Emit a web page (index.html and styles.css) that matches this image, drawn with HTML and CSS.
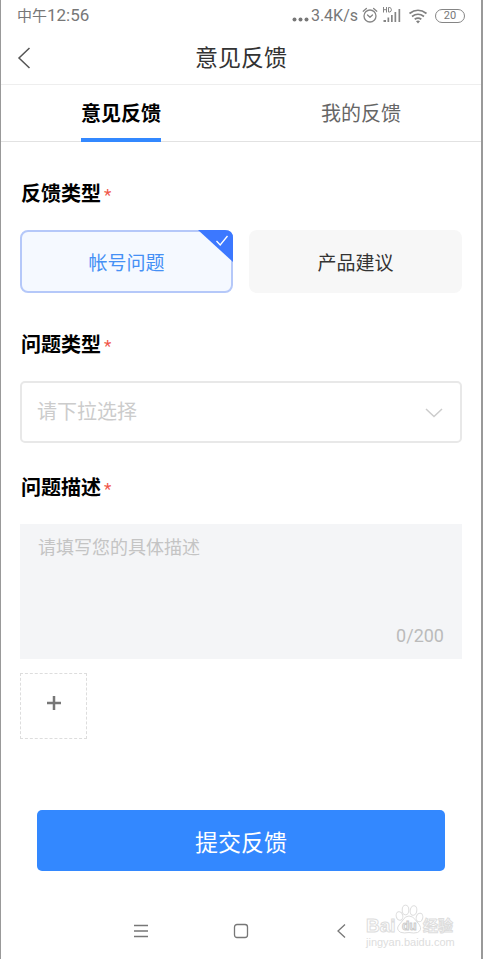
FILE: index.html
```html
<!DOCTYPE html>
<html lang="zh-CN">
<head>
<meta charset="utf-8">
<meta name="viewport" content="width=device-width, initial-scale=1">
<title>意见反馈</title>
<link rel="stylesheet" href="styles.css">
</head>
<body>
<div class="screen">
  <div class="status">
    <div class="status-time"><span class="status-period">中午</span>12:56</div>
    <div class="status-icons">
      <svg class="dots" width="17" height="18" viewBox="0 0 17 18" fill="#777"><circle cx="2.5" cy="12.5" r="2"/><circle cx="8.5" cy="12.5" r="2"/><circle cx="14.5" cy="12.5" r="2"/></svg>
      <span class="speed">3.4K/s</span>
      <svg class="alarm" width="16" height="18" viewBox="0 0 16 18" fill="none" stroke="#858585" stroke-width="1.3" stroke-linecap="round" stroke-linejoin="round"><circle cx="8" cy="9" r="6"/><path d="M1.2 4.2 4.4 1.500M14.8 4.2 11.6 1.500M5.5 8 8 10.300l2.500-2.300"/></svg>
      <svg class="signal" width="20" height="18" viewBox="0 0 20 18"><g fill="none" stroke="#858585" stroke-width="1"><path d="M1.500 0v5.500M4.500 0v5.500M1.500 2.700h3M6.500.5V5h1.300q1.600-.4 1.600-2.200T7.800.5z"/></g><path fill="#858585" d="M1.500 13h2.500v2H1.500zM5.500 10.500h1.700V15H5.500zM9 8h1.700v7H9zM12.500 5h1.700v10h-1.700zM16.500 2h1.700v13h-1.700z"/></svg>
      <svg class="wifi" width="20" height="18" viewBox="0 0 20 18" fill="none" stroke="#808080" stroke-width="1.7"><path d="M1.500 6.500q8.500-6.500 17 0M4 9.500q6-4.500 12 0M6.700 12.300q3.300-2.400 6.600 0"/><path fill="#808080" stroke="none" d="M8 14.200q2-1.300 4 0l-2 2.300z"/></svg>
      <span class="battery">20</span>
    </div>
  </div>

  <header class="header">
    <button class="back" type="button" aria-label="返回"><svg width="14" height="22" viewBox="0 0 14 22" fill="none" stroke="#555" stroke-width="1.5"><path d="M12.500 1 2 11l10.500 10"/></svg></button>
    <h1 class="title">意见反馈</h1>
  </header>

  <nav class="tabs">
    <button class="tab tab-active" type="button"><span class="tab-text">意见反馈</span></button>
    <button class="tab" type="button"><span class="tab-text">我的反馈</span></button>
  </nav>

  <form class="form">
    <fieldset class="field">
      <legend class="label">反馈类型<span class="required">*</span></legend>
      <div class="options">
        <label class="option">
          <input class="option-input" type="radio" name="kind" checked>
          <span class="option-text">帐号问题</span>
          <svg class="corner" width="35" height="32" viewBox="0 0 35 32"><path fill="#3c78ff" d="M0 0h27q8 0 8 8v24z"/><path fill="none" stroke="#fff" stroke-width="1.300" d="m18.500 11 3.700 4 7.300-9"/></svg>
        </label>
        <label class="option">
          <input class="option-input" type="radio" name="kind">
          <span class="option-text">产品建议</span>
        </label>
      </div>
    </fieldset>

    <div class="field">
      <label class="label" for="topic">问题类型<span class="required">*</span></label>
      <div class="select-box">
        <select class="select" id="topic"><option>请下拉选择</option></select>
        <svg class="chevron" width="18" height="10" viewBox="0 0 18 10" fill="none" stroke="#ccc" stroke-width="1.500"><path d="m1 1 8 7.500L17 1"/></svg>
      </div>
    </div>

    <div class="field field-last">
      <label class="label" for="detail">问题描述<span class="required">*</span></label>
      <div class="detail-box">
        <textarea class="detail" id="detail" maxlength="200" placeholder="请填写您的具体描述"></textarea>
        <span class="count">0/200</span>
      </div>
    </div>

    <button class="upload" type="button" aria-label="添加图片"><svg width="14" height="14" viewBox="0 0 14 14" stroke="#777" stroke-width="2.500"><path d="M7 0v14M0 7h14"/></svg></button>
    <button class="submit" type="submit">提交反馈</button>
  </form>

  <footer class="system">
    <button class="key" type="button" aria-label="菜单"><svg width="16" height="16" viewBox="0 0 16 16" stroke="#777" stroke-width="1.300"><path d="M1 2.500h14M1 8h14M1 13.500h14"/></svg></button>
    <button class="key" type="button" aria-label="主页"><svg width="16" height="16" viewBox="0 0 16 16" fill="none" stroke="#777" stroke-width="1.300"><rect x="1.500" y="1.500" width="13" height="13" rx="2.500"/></svg></button>
    <button class="key" type="button" aria-label="后退"><svg width="16" height="16" viewBox="0 0 16 16" fill="none" stroke="#777" stroke-width="1.300"><path d="M12 1.500 5 8l7 6.500"/></svg></button>
    <svg class="watermark" width="92" height="46" viewBox="0 0 92 46" fill="#fff" stroke="#ddd" stroke-width="1">
      <g class="mark"><text x="1" y="28" font-size="19">Bai</text><text class="mark-cn" x="58" y="27" font-size="15">经验</text></g>
      <ellipse cx="34.500" cy="12" rx="3.300" ry="4.300" transform="rotate(-15 34.500 12)"/><ellipse cx="40.500" cy="6" rx="3.300" ry="4.800"/><ellipse cx="48.500" cy="6.500" rx="3.300" ry="4.800" transform="rotate(10 48.500 6.500)"/><ellipse cx="54.500" cy="13.500" rx="3.300" ry="4.300" transform="rotate(15 54.500 13.500)"/>
      <path d="M44 12q4 0 6.500 4l4 5q3 5-2 7.500-3.500 1-8.500 0-5 1-8.500-.2-5-3-1.500-7.300l4-5Q40 12 44 12z"/>
      <g class="mark"><text x="37" y="26" font-size="12" stroke="#ccc">du</text><text class="mark-url" x="1" y="42" font-size="11">jingyan.baidu.com</text></g>
    </svg>
  </footer>
</div>
</body>
</html>
```
FILE: styles.css
```css
* { box-sizing: border-box; }

body {
  margin: 0;
  background: #fff;
  color: #000;
  font-family: Roboto, "Noto Sans CJK SC", sans-serif;
}

button, select, textarea {
  margin: 0;
  padding: 0;
  border: 0;
  background: none;
  color: inherit;
  font-family: inherit;
}

svg { display: block; }

.screen {
  display: flex;
  flex-direction: column;
  min-height: 100vh;
  border-left: 1px solid #999;
  border-right: 2px solid #999;
}

.status {
  display: flex;
  justify-content: space-between;
  align-items: center;
  height: 31px;
  padding: 0 16px;
  color: #777;
  font-size: 17px;
  line-height: 20px;
}

.status-period { font-size: 15px; }

.status-icons { display: flex; align-items: center; }
.speed { margin: 0 4px 0 2px; font-size: 16px; }
.alarm { margin-right: 4px; }
.wifi { margin: 0 7px 0 6px; }

.battery {
  width: 30px;
  height: 14px;
  border: 1px solid #858585;
  border-radius: 7px;
  font-size: 11px;
  line-height: 12px;
  text-align: center;
}

.header {
  display: grid;
  grid-template-columns: 48px 1fr 48px;
  align-items: center;
  height: 54px;
  border-bottom: 1px solid #eee;
}

.back { padding-left: 16px; }

.title {
  margin: 0;
  padding-top: 2px;
  color: #333;
  font-size: 23px;
  font-weight: 400;
  line-height: 32px;
  text-align: center;
}

.tabs {
  display: grid;
  grid-template-columns: 1fr 1fr;
  height: 57px;
  border-bottom: 1px solid #e2e2e2;
}

.tab {
  display: flex;
  justify-content: center;
  height: 57px;
  color: #666;
  font-size: 20px;
  line-height: 58px;
}

.tab-text {
  height: 57px;
  border-bottom: 4px solid transparent;
}

.tab-active { color: #000; font-weight: 700; }
.tab-active .tab-text { border-color: #3388ff; }

.form { padding: 38px 19px 0; }

.field {
  min-width: 0;
  margin: 0 0 38px;
  padding: 0;
  border: 0;
}

.field:nth-child(2) { margin-bottom: 31px; }
.field-last { margin-bottom: 14px; }

.label {
  display: block;
  height: 28px;
  margin-bottom: 22px;
  padding: 0 1px;
  font-size: 20px;
  font-weight: 700;
  line-height: 28px;
}

.required {
  margin-left: 3px;
  color: #f0564a;
  font-size: 17px;
  font-weight: 400;
  line-height: 1;
}

.options {
  display: grid;
  grid-template-columns: 1fr 1fr;
  gap: 16px;
}

.option {
  position: relative;
  display: flex;
  justify-content: center;
  align-items: center;
  height: 63px;
  border-radius: 8px;
  background: #f7f7f7;
  color: #333;
  font-size: 19px;
}

.option:has(:checked) {
  border: 2px solid #b5c8f9;
  background: #f5f9ff;
  color: #4590f5;
}

.option-input { position: absolute; opacity: 0; }

.corner {
  position: absolute;
  top: -2px;
  right: -2px;
}

.select-box { position: relative; }

.select {
  display: block;
  width: 100%;
  height: 62px;
  padding: 0 48px 0 15px;
  border: 2px solid #e8e8e8;
  border-radius: 5px;
  background: #fff;
  color: #ccc;
  font-size: 20px;
  appearance: none;
}

.chevron {
  position: absolute;
  top: 27px;
  right: 19px;
  pointer-events: none;
}

.detail-box {
  display: flex;
  flex-direction: column;
  height: 135px;
  padding: 11px 18px;
  background: #f4f5f7;
}

.detail {
  flex: 1;
  width: 100%;
  outline: 0;
  font-size: 18px;
  line-height: 26px;
  resize: none;
}

.detail::placeholder { color: #c4c4c4; }

.count {
  color: #bbb;
  font-size: 18px;
  line-height: 24px;
  text-align: right;
}

.upload {
  display: flex;
  justify-content: center;
  align-items: center;
  width: 67px;
  height: 66px;
  padding-bottom: 6px;
  border: 1px dashed #ddd;
}

.submit {
  display: block;
  width: calc(100% - 34px);
  height: 61px;
  margin: 71px auto 0;
  border-radius: 5px;
  background: #3388ff;
  color: #fff;
  font-size: 23px;
}

.system {
  position: relative;
  display: flex;
  justify-content: center;
  gap: 84px;
  padding: 52px 0 20px;
}

.watermark {
  position: absolute;
  top: 33px;
  right: 24px;
}

.mark {
  font-family: "Liberation Sans", "Noto Sans CJK SC", sans-serif;
  font-weight: 700;
}

.mark-url { fill: #ddd; stroke: none; font-weight: 400; }
```
